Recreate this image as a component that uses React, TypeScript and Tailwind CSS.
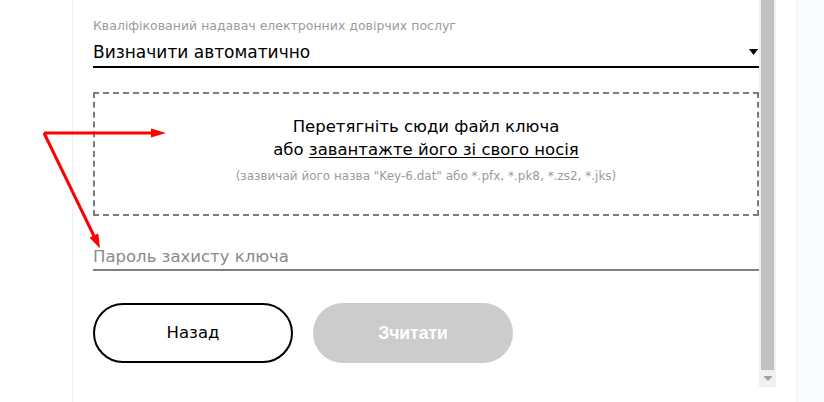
import React from "react";

export default function App() {
  return (
    <div
      className="relative w-[824px] h-[402px] overflow-hidden bg-white flex"
      style={{ fontFamily: '"DejaVu Sans", sans-serif' }}
    >
      <div className="w-[72px] shrink-0 bg-white" />
      <div className="flex border-l border-r border-[#eef1f6] bg-white">
        <div className="w-[686px] pl-[20px] flex flex-col">
          <div className="mt-[18px] text-[12.5px] leading-[16px] text-[#9b9b9b]">
            Кваліфікований надавач електронних довірчих послуг
          </div>
          <div className="mt-[6px] flex items-center justify-between border-b-2 border-black pb-[2px] text-[17px] leading-[24px] text-black">
            <span>Визначити автоматично</span>
            <svg width="9" height="6" viewBox="0 0 9 6" className="mr-[1px]">
              <polygon points="0,0 9,0 4.5,6" fill="#000" />
            </svg>
          </div>
          <div className="mt-6 h-[124px] border-2 border-dashed border-[#7c7c7c] flex flex-col items-center pt-[21px]">
            <div className="text-[16.5px] leading-[24px] text-black">Перетягніть сюди файл ключа</div>
            <div className="text-[16.5px] leading-[22px] text-black">
              або <span className="underline underline-offset-2">завантажте його зі свого носія</span>
            </div>
            <div className="mt-[7px] text-[12px] leading-[16px] text-[#9b9b9b]">
              (зазвичай його назва "Key-6.dat" або *.pfx, *.pk8, *.zs2, *.jks)
            </div>
          </div>
          <div className="mt-[29px] border-b-2 border-[#7f7f7f] text-[16.5px] leading-[24px] text-[#8a8a8a]">
            Пароль захисту ключа
          </div>
          <div className="mt-[32px] flex gap-[20px]">
            <div className="w-[200px] h-[60px] rounded-full border-2 border-black flex items-center justify-center text-[16.5px] text-black">
              Назад
            </div>
            <div
              className="w-[200px] h-[60px] rounded-full bg-[#cccccc] flex items-center justify-center text-[17.5px] font-bold text-white"
              style={{ fontFamily: '"Liberation Sans", Arial, sans-serif' }}
            >
              Зчитати
            </div>
          </div>
        </div>
        <div className="w-[17px] h-[387px] bg-[#f1f1f1] flex flex-col items-center">
          <div className="w-[13px] h-[370px] bg-[#c1c1c1]" />
          <svg width="8" height="6" viewBox="0 0 8 6" className="mt-[6px]">
            <rect x="0" y="0" width="8" height="1" fill="#a3a3a3" />
            <polygon points="0,1 8,1 4,5" fill="#a3a3a3" />
          </svg>
        </div>
        <div className="w-[20px]" />
      </div>
      <div className="flex-1 bg-[#fafbfd]" />
      <svg
        className="absolute left-0 top-0 pointer-events-none"
        width="824"
        height="402"
        viewBox="0 0 824 402"
      >
        <line x1="44" y1="133" x2="153" y2="133" stroke="#ff0000" strokeWidth="3" />
        <polygon points="151,128.5 166,133 151,137.5" fill="#ff0000" />
        <line x1="44" y1="133" x2="94" y2="236" stroke="#ff0000" strokeWidth="3" />
        <polygon points="89.5,237.6 100,248.5 98.3,233.4" fill="#ff0000" />
      </svg>
    </div>
  );
}
